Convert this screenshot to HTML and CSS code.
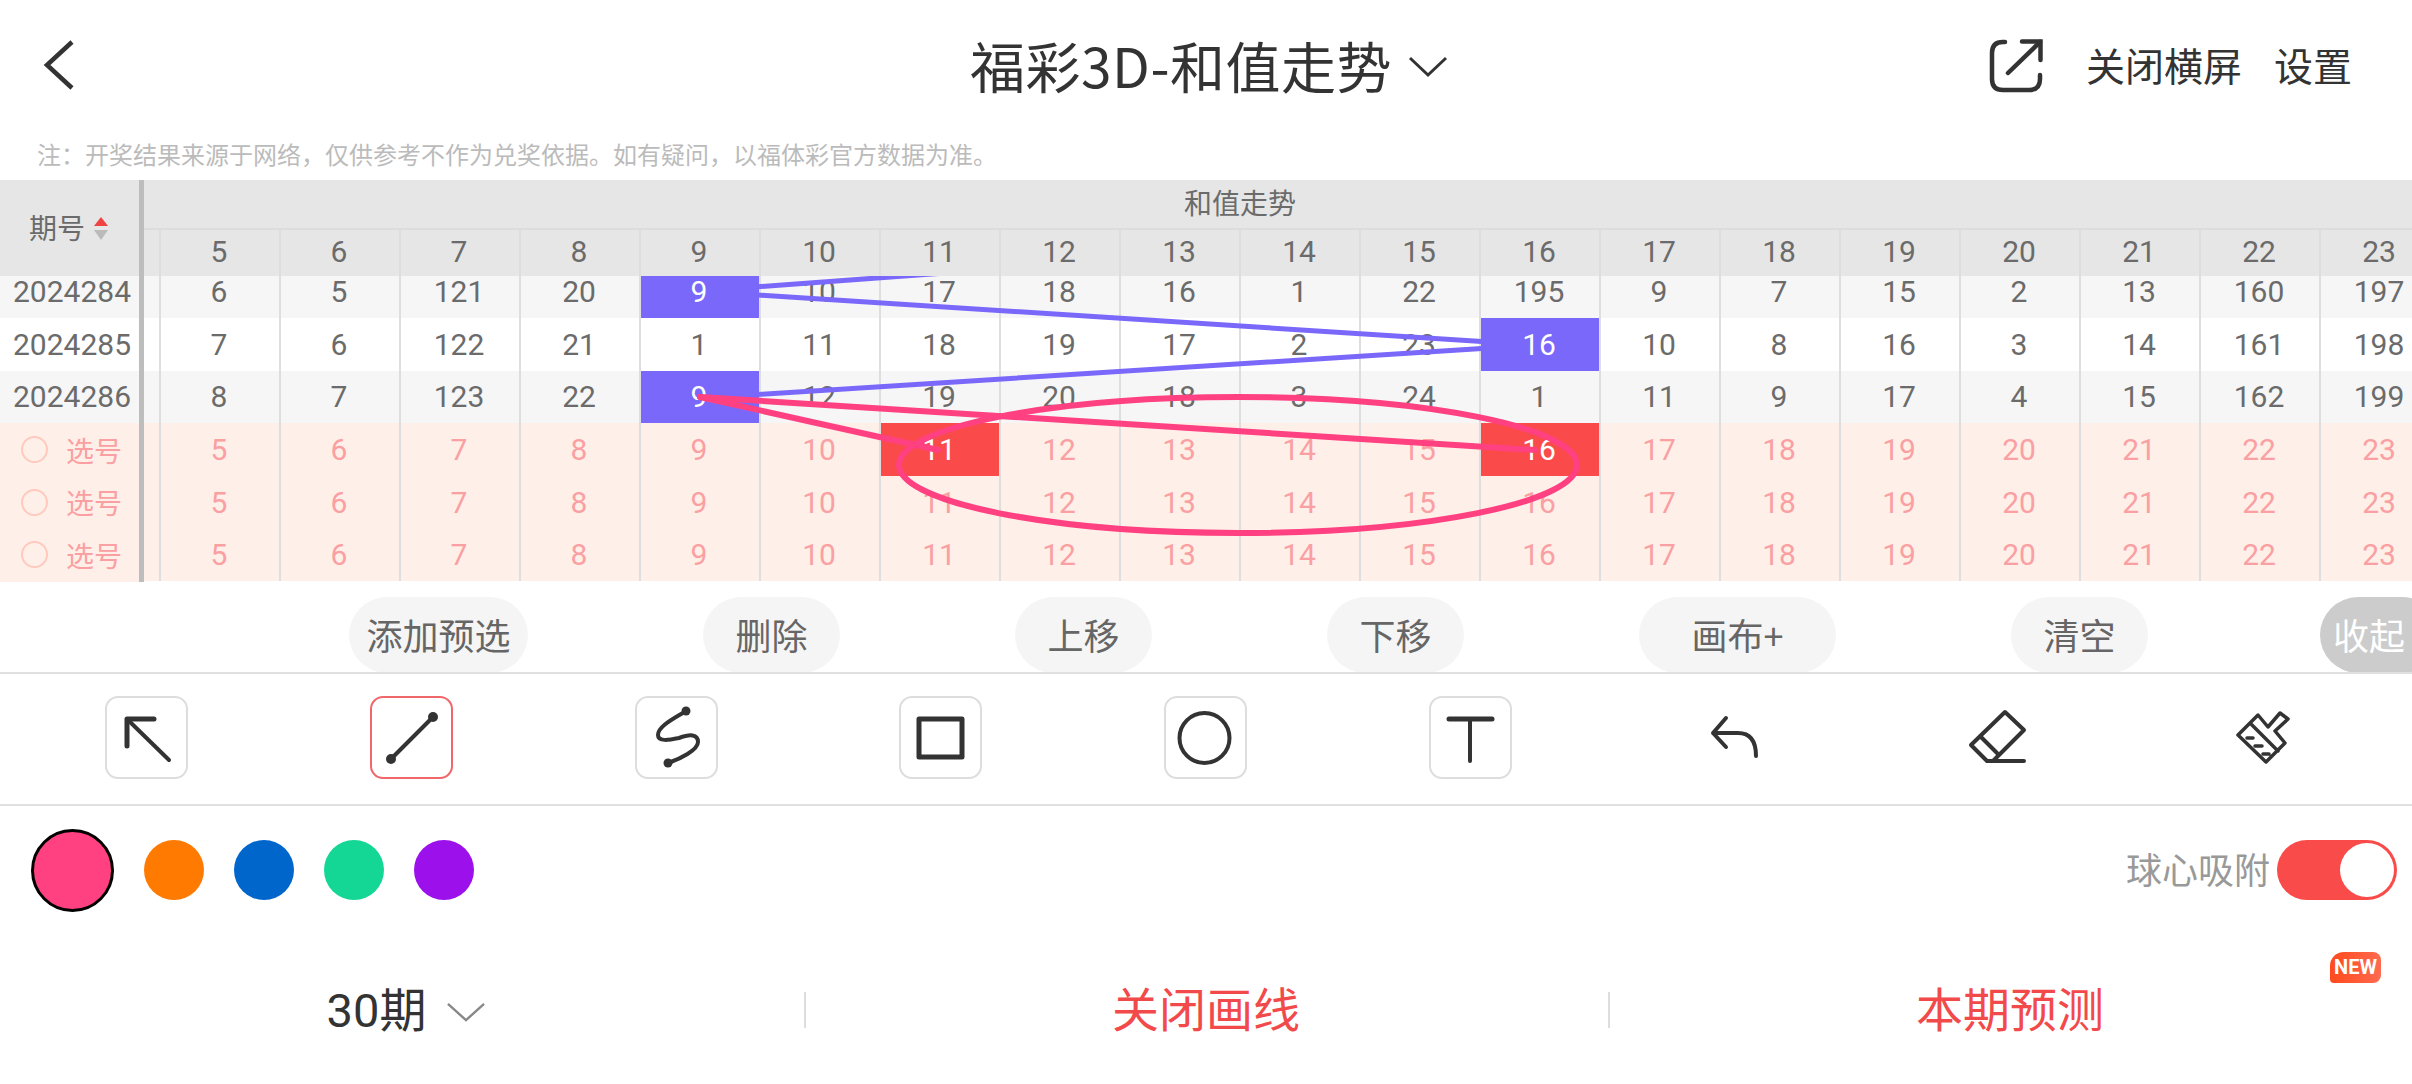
FILE: index.html
```html
<!DOCTYPE html>
<html lang="zh-CN">
<head>
<meta charset="utf-8">
<title>福彩3D-和值走势</title>
<link rel="stylesheet" href="styles.css">
</head>
<body>
<div class="page">
  <header class="topbar">
    <div class="top-left">
      <svg class="back" viewBox="0 0 60 60"><polyline points="36,5 11,28 36,51"/></svg>
    </div>
    <div class="title"><span class="title-text">福彩3D-和值走势</span>
      <svg class="title-chev" viewBox="0 0 40 22"><polyline points="2,2 20,19 38,2"/></svg>
    </div>
    <div class="top-right">
      <svg class="share" viewBox="0 0 100 90"><path d="M35 22 H33 Q22 22 22 33 V59 Q22 70 33 70 H59 Q70 70 70 59 V55"/><path d="M38 53 L70 22"/><path d="M52 21.500 H70.500 V40"/></svg>
      <span class="top-link link-a">关闭横屏</span>
      <span class="top-link">设置</span>
    </div>
  </header>
  <p class="note">注：开奖结果来源于网络，仅供参考不作为兑奖依据。如有疑问，以福体彩官方数据为准。</p>

  <section class="table">
    <div class="frozen">
      <div class="frozen-head">
        <span class="frozen-label">期号</span>
        <span class="sort"><i class="up"></i><i class="down"></i></span>
      </div>
      <div class="frozen-body">
        <div class="rows">
          <div class="f-row alt">2024284</div>
          <div class="f-row">2024285</div>
          <div class="f-row alt">2024286</div>
          <div class="f-row pick"><i class="radio"></i><span>选号</span></div>
          <div class="f-row pick"><i class="radio"></i><span>选号</span></div>
          <div class="f-row pick"><i class="radio"></i><span>选号</span></div>
        </div>
      </div>
    </div>
    <div class="scroll">
      <div class="group-title"><span>和值走势</span></div>
      <div class="row head">
        <div class="c"></div><div class="c">5</div><div class="c">6</div><div class="c">7</div><div class="c">8</div><div class="c">9</div><div class="c">10</div><div class="c">11</div><div class="c">12</div><div class="c">13</div><div class="c">14</div><div class="c">15</div><div class="c">16</div><div class="c">17</div><div class="c">18</div><div class="c">19</div><div class="c">20</div><div class="c">21</div><div class="c">22</div><div class="c">23</div>
      </div>
      <div class="body">
        <div class="rows">
          <div class="row alt">
            <div class="c"></div><div class="c">6</div><div class="c">5</div><div class="c">121</div><div class="c">20</div><div class="c blue">9</div><div class="c">10</div><div class="c">17</div><div class="c">18</div><div class="c">16</div><div class="c">1</div><div class="c">22</div><div class="c">195</div><div class="c">9</div><div class="c">7</div><div class="c">15</div><div class="c">2</div><div class="c">13</div><div class="c">160</div><div class="c">197</div>
          </div>
          <div class="row">
            <div class="c"></div><div class="c">7</div><div class="c">6</div><div class="c">122</div><div class="c">21</div><div class="c">1</div><div class="c">11</div><div class="c">18</div><div class="c">19</div><div class="c">17</div><div class="c">2</div><div class="c">23</div><div class="c blue">16</div><div class="c">10</div><div class="c">8</div><div class="c">16</div><div class="c">3</div><div class="c">14</div><div class="c">161</div><div class="c">198</div>
          </div>
          <div class="row alt">
            <div class="c"></div><div class="c">8</div><div class="c">7</div><div class="c">123</div><div class="c">22</div><div class="c blue">9</div><div class="c">12</div><div class="c">19</div><div class="c">20</div><div class="c">18</div><div class="c">3</div><div class="c">24</div><div class="c">1</div><div class="c">11</div><div class="c">9</div><div class="c">17</div><div class="c">4</div><div class="c">15</div><div class="c">162</div><div class="c">199</div>
          </div>
          <div class="row pick">
            <div class="c"></div><div class="c">5</div><div class="c">6</div><div class="c">7</div><div class="c">8</div><div class="c">9</div><div class="c">10</div><div class="c red">11</div><div class="c">12</div><div class="c">13</div><div class="c">14</div><div class="c">15</div><div class="c red">16</div><div class="c">17</div><div class="c">18</div><div class="c">19</div><div class="c">20</div><div class="c">21</div><div class="c">22</div><div class="c">23</div>
          </div>
          <div class="row pick">
            <div class="c"></div><div class="c">5</div><div class="c">6</div><div class="c">7</div><div class="c">8</div><div class="c">9</div><div class="c">10</div><div class="c">11</div><div class="c">12</div><div class="c">13</div><div class="c">14</div><div class="c">15</div><div class="c">16</div><div class="c">17</div><div class="c">18</div><div class="c">19</div><div class="c">20</div><div class="c">21</div><div class="c">22</div><div class="c">23</div>
          </div>
          <div class="row pick">
            <div class="c"></div><div class="c">5</div><div class="c">6</div><div class="c">7</div><div class="c">8</div><div class="c">9</div><div class="c">10</div><div class="c">11</div><div class="c">12</div><div class="c">13</div><div class="c">14</div><div class="c">15</div><div class="c">16</div><div class="c">17</div><div class="c">18</div><div class="c">19</div><div class="c">20</div><div class="c">21</div><div class="c">22</div><div class="c">23</div>
          </div>
        </div>
        <svg class="canvas" viewBox="144 276 2268 306">
          <g class="stroke-blue">
            <line x1="758" y1="286.700" x2="1000" y2="269"/>
            <line x1="758" y1="295" x2="1482" y2="341.500"/>
            <line x1="1482" y1="348.500" x2="758" y2="394.500"/>
          </g>
          <g class="stroke-pink">
            <line x1="700" y1="397" x2="938" y2="450"/>
            <line x1="700" y1="397" x2="1535" y2="450"/>
            <ellipse cx="1238" cy="465" rx="339" ry="68"/>
          </g>
        </svg>
      </div>
    </div>
  </section>

  <div class="actions">
    <div class="btn btn-lg">添加预选</div>
    <div class="btn">删除</div>
    <div class="btn">上移</div>
    <div class="btn">下移</div>
    <div class="btn btn-xl">画布+</div>
    <div class="btn">清空</div>
    <div class="btn btn-collapse">收起</div>
  </div>

  <div class="tools">
    <div class="tool"><svg viewBox="0 0 83 83"><path class="s5r" d="M22 50 V23 H49"/><path class="s4" d="M23 24 L64 64"/></svg></div>
    <div class="tool active"><svg viewBox="0 0 83 83"><path class="s4" d="M63 21 L21 63"/><circle class="dot" cx="63" cy="21" r="5"/><circle class="dot" cx="21" cy="63" r="5"/></svg></div>
    <div class="tool"><svg viewBox="0 0 83 83"><path class="s4" d="M51 15 C40 22 23 30 23 39 C23 46 34 44 44 42 C55 38 63 38 63 46 C63 54 45 63 33 67"/><circle class="dot" cx="51" cy="15" r="4.500"/><circle class="dot" cx="33" cy="67" r="4.500"/></svg></div>
    <div class="tool"><svg viewBox="0 0 83 83"><rect class="s5" x="20" y="23" width="43" height="38"/></svg></div>
    <div class="tool"><svg viewBox="0 0 83 83"><circle class="s4" cx="40.500" cy="42" r="25"/></svg></div>
    <div class="tool"><svg viewBox="0 0 83 83"><path class="s5r" d="M20 23 H63"/><path class="s4" d="M41 23 V65"/></svg></div>
    <div class="tool plain"><svg viewBox="0 0 83 83"><path class="s4" d="M32 22 L19 37 L32 51 M19 37 H44 Q62 37 62 60"/></svg></div>
    <div class="tool plain"><svg viewBox="0 0 83 83"><path class="s4" d="M46 16 L65 34 L34 65 H28 L12 49 Z M21 40 L38 57 M34 65 H65"/></svg></div>
    <div class="tool plain"><svg viewBox="0 0 83 83"><path class="s35" d="M15 39 L35 19 L45 31 L57 17 L65 23 L52 35 L62 47 L43 66 Z M28 28 L55 55 M24 42 H30 M32 50 H39 M40 58 H46"/></svg></div>
  </div>

  <div class="palette">
    <div class="swatches">
      <i class="sw sw-pink"></i>
      <i class="sw sw-orange"></i>
      <i class="sw sw-blue"></i>
      <i class="sw sw-green"></i>
      <i class="sw sw-purple"></i>
    </div>
    <div class="snap">
      <span>球心吸附</span>
      <div class="toggle"><i></i></div>
    </div>
  </div>

  <nav class="bottom">
    <div class="b-item period"><span>30期</span><svg viewBox="0 0 40 20"><polyline points="1,1 20,18 39,1"/></svg></div>
    <div class="b-item red-text divided">关闭画线</div>
    <div class="b-item red-text divided">本期预测<span class="new">NEW</span></div>
  </nav>
</div>
</body>
</html>
```
FILE: styles.css
```css
* { box-sizing: border-box; }
html, body { margin: 0; padding: 0; background: #fff; }
body { font-family: "Noto Sans CJK SC", "Roboto", sans-serif; color: #333; }
.page { width: 2412px; height: 1084px; overflow: hidden; }

.topbar { height: 130px; display: grid; grid-template-columns: 1fr auto 1fr; align-items: center; }
.top-left { display: flex; padding: 3px 0 0 36px; }
.back { width: 60px; height: 60px; }
.back polyline { fill: none; stroke: #333; stroke-width: 4.500; }
.title { font-size: 55px; line-height: 60px; padding-left: 6px; display: flex; align-items: center; gap: 16px; white-space: nowrap; }
.title-text { letter-spacing: 0.5px; margin-top: -3px; }
.title-chev { width: 40px; height: 22px; margin-top: 4px; }
.title-chev polyline { fill: none; stroke: #333; stroke-width: 3; }
.top-right { display: flex; align-items: center; justify-content: flex-end; padding-right: 60px; }
.share { width: 100px; height: 90px; margin-right: 16px; }
.share path { fill: none; stroke: #333; stroke-width: 4.500; stroke-linecap: round; }
.top-link { font-size: 39px; line-height: 44px; margin-top: -3px; }
.link-a { margin-right: 32px; }

.note { margin: 0; height: 50px; padding: 12px 0 0 37px; font-size: 24px; line-height: 24px; color: #bbb; white-space: nowrap; }

.table { display: flex; height: 402px; font-family: "Roboto", "Noto Sans CJK SC", sans-serif; font-weight: 400; font-size: 30px; color: #6b6b6b; }
.frozen { width: 144px; flex: none; border-right: 5px solid #bdbdbd; display: flex; flex-direction: column; }
.frozen-head { height: 96px; background: #e6e6e6; display: flex; align-items: center; padding-left: 29px; gap: 9px; font-size: 28px; }
.frozen-label { margin-top: -3px; }
.sort { display: flex; flex-direction: column; gap: 4px; }
.sort i { display: block; width: 0; height: 0; border-left: 7px solid transparent; border-right: 7px solid transparent; }
.sort .up { border-bottom: 9px solid #f04444; }
.sort .down { border-top: 10px solid #bbb; }
.frozen-body, .body { flex: 1; overflow: hidden; position: relative; }
.frozen-body { background: #ffefe9; }
.rows { margin-top: -10.670px; }
.f-row { height: 52.670px; display: flex; align-items: center; justify-content: center; background: #fff; padding-left: 5px; }
.f-row.alt { background: #f6f6f6; }
.f-row.pick { background: #ffefe9; color: #fa9fa2; font-size: 28px; justify-content: flex-start; padding-left: 21px; gap: 18px; }
.radio { width: 27px; height: 27px; border-radius: 50%; border: 2px solid #ffc9bd; flex: none; }

.scroll { flex: 1; min-width: 0; overflow: hidden; display: flex; flex-direction: column; }
.group-title { flex: none; height: 50px; background: #e6e6e6; border-bottom: 2px solid #dcdcdc; font-size: 28px; line-height: 50px; }
.group-title span { display: block; width: 2192px; text-align: center; }
.row { display: grid; grid-template-columns: 17px repeat(19, 120px); width: 2297px; height: 52.670px; background: #fff; }
.row.head { height: 46px; flex: none; background: #e6e6e6; }
.row.head .c { padding-bottom: 3px; }
.row.alt { background: #f6f6f6; }
.row.pick { background: #ffefe9; color: #fa9fa2; }
.c { display: flex; align-items: center; justify-content: center; border-right: 2px solid #dedede; padding-right: 2px; background-clip: padding-box; }
.c.blue { background-color: #7a68fb; color: #fff; }
.c.red { background-color: #fb4a4a; color: #fff; }
.canvas { position: absolute; left: 0; top: 0; width: 2268px; height: 306px; pointer-events: none; }
.canvas line, .canvas ellipse { fill: none; stroke-linecap: round; }
.stroke-blue { stroke: #7a68fb; stroke-width: 5; }
.stroke-pink { stroke: #ff4081; stroke-width: 6; }

.actions { height: 92px; border-bottom: 2px solid #e0e0e0; overflow: hidden; display: flex; padding: 15px 0 0 349px; gap: 175px; align-items: flex-start; }
.btn { flex: none; width: 137px; height: 76px; border-radius: 38px; background: #f5f5f5; color: #666; font-size: 36px; line-height: 74px; text-align: center; }
.btn-lg { width: 179px; }
.btn-xl { width: 197px; }
.btn-collapse { width: 120px; margin-left: -3px; background: #ccc; color: #fff; text-align: left; padding-left: 13px; }

.tools { height: 132px; border-bottom: 2px solid #e0e0e0; display: flex; gap: 181.800px; padding: 22px 0 0 105px; align-items: flex-start; }
.tool { flex: none; width: 83px; height: 83px; border: 2px solid #ddd; border-radius: 13px; position: relative; }
.tool.active { border-color: #f0676a; }
.tool.plain { border-color: transparent; }
.tool svg { position: absolute; left: -2px; top: -2px; width: 83px; height: 83px; }
.tool svg path, .tool svg rect, .tool svg circle { fill: none; stroke: #333; stroke-linecap: round; stroke-linejoin: round; }
.tool svg .dot { fill: #333; stroke: none; }
.s35 { stroke-width: 3.500; }
.s4 { stroke-width: 4; }
.s5r { stroke-width: 5; }
.s5 { stroke-width: 5; stroke-linecap: butt; }

.palette { height: 128px; display: flex; align-items: center; justify-content: space-between; padding: 0 15px 0 31px; }
.swatches { display: flex; align-items: center; gap: 30px; }
.sw { display: block; width: 60px; height: 60px; border-radius: 50%; }
.sw-pink { width: 83px; height: 83px; background: #ff4081; border: 3px solid #000; }
.sw-orange { background: #ff7a00; }
.sw-blue { background: #0066cc; }
.sw-green { background: #14d695; }
.sw-purple { background: #9b10eb; }
.snap { display: flex; align-items: center; gap: 7px; font-size: 36px; color: #999; }
.snap span { line-height: 56px; margin-top: -4px; }
.toggle { width: 120px; height: 60px; border-radius: 30px; background: #fa4b4b; position: relative; }
.toggle i { position: absolute; left: 63px; top: 3px; width: 54px; height: 54px; border-radius: 50%; background: #fff; }

.bottom { height: 150px; display: grid; grid-template-columns: repeat(3, 1fr); }
.b-item { position: relative; display: flex; align-items: center; justify-content: center; font-size: 47px; padding-bottom: 5px; }
.divided::before { content: ""; position: absolute; left: 0; top: 58px; width: 2px; height: 36px; background: #ddd; }
.period { gap: 21px; font-family: "Roboto", "Noto Sans CJK SC", sans-serif; font-size: 47px; padding-left: 8px; }
.period svg { width: 38px; height: 19px; margin-top: 12px; }
.period polyline { fill: none; stroke: #888; stroke-width: 2.500; }
.red-text { color: #f24a4a; }
.new { position: absolute; left: 722px; top: 18px; width: 51px; height: 31px; border-radius: 14px 8px 8px 4px; background: linear-gradient(90deg, #ff4a1c, #ff6a50); color: #fff; font-family: "Roboto", sans-serif; font-size: 20px; font-weight: 700; line-height: 31px; text-align: center; }
```
